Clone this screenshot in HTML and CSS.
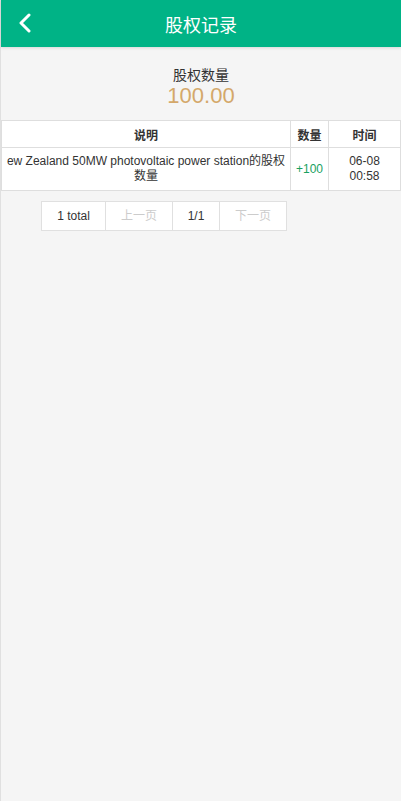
FILE: index.html
```html
<!DOCTYPE html>
<html lang="zh-CN">
<head>
  <meta charset="UTF-8" />
  <meta name="viewport" content="width=device-width, initial-scale=1.0"/>
  <title>股权记录</title>
  <link rel="stylesheet" href="styles.css">
</head>
<body>
  <div class="page">
    <header class="topbar">
      <a class="back" href="#">
        <svg width="14" height="20" viewBox="0 0 14 20"><path d="M11 2 L3 10 L11 18" fill="none" stroke="#fff" stroke-width="3" stroke-linecap="round" stroke-linejoin="round"/></svg>
      </a>
      <h1>股权记录</h1>
    </header>

    <div class="summary">
      <p class="label">股权数量</p>
      <p class="amount">100.00</p>
    </div>

    <table class="records">
      <thead>
        <tr>
          <th class="col-desc">说明</th>
          <th class="col-num">数量</th>
          <th class="col-time">时间</th>
        </tr>
      </thead>
      <tbody>
        <tr>
          <td>ew Zealand 50MW photovoltaic power station的股权数量</td>
          <td class="plus">+100</td>
          <td>06-08<br>00:58</td>
        </tr>
      </tbody>
    </table>

    <div class="pager">
      <span>1 total</span>
      <span class="off">上一页</span>
      <span>1/1</span>
      <span class="off">下一页</span>
    </div>
  </div>
</body>
</html>
```

FILE: styles.css
```css
body {
  margin: 0;
  font-family: "Liberation Sans", Arial, "Noto Sans CJK SC", sans-serif;
  background: #f5f5f5;
  color: #333;
}

.page {
  min-height: 801px;
  border-left: 1px solid #e0e0e0;
}

.topbar {
  height: 47px;
  background: #00b386;
  display: flex;
  align-items: center;
  justify-content: center;
  position: relative;
  box-shadow: 0 1px 3px rgba(0, 0, 0, 0.12);
}

.topbar h1 {
  margin: 0;
  font-size: 18px;
  font-weight: normal;
  color: white;
}

.back {
  position: absolute;
  left: 17px;
  top: 13px;
  display: flex;
}

.summary {
  text-align: center;
  padding-top: 19px;
  height: 54px;
}

.summary p {
  margin: 0;
}

.label {
  font-size: 14px;
  line-height: 18px;
  color: #333;
}

.amount {
  font-size: 22px;
  line-height: 24px;
  color: #d4a86a;
}

.records {
  width: 100%;
  border-collapse: collapse;
  background: white;
  font-size: 12px;
}

.records th,
.records td {
  border: 1px solid #dedede;
  text-align: center;
  padding: 0 3px;
}

.records th {
  height: 26px;
  font-weight: bold;
}

.records td {
  height: 42px;
  line-height: 15px;
}

.col-num {
  width: 31px;
}

.col-time {
  width: 65px;
}

.plus {
  color: #19a15f;
}

.pager {
  display: flex;
  margin: 10px 0 0 40px;
  width: max-content;
  background: white;
  border: 1px solid #e0e0e0;
  font-size: 12px;
}

.pager span {
  height: 28px;
  line-height: 28px;
  text-align: center;
  border-left: 1px solid #e0e0e0;
}

.pager span:first-child {
  border-left: none;
  width: 63px;
}

.pager span:nth-child(2) {
  width: 66px;
}

.pager span:nth-child(3) {
  width: 46px;
}

.pager span:nth-child(4) {
  width: 66px;
}

.pager .off {
  color: #ccc;
}
```
